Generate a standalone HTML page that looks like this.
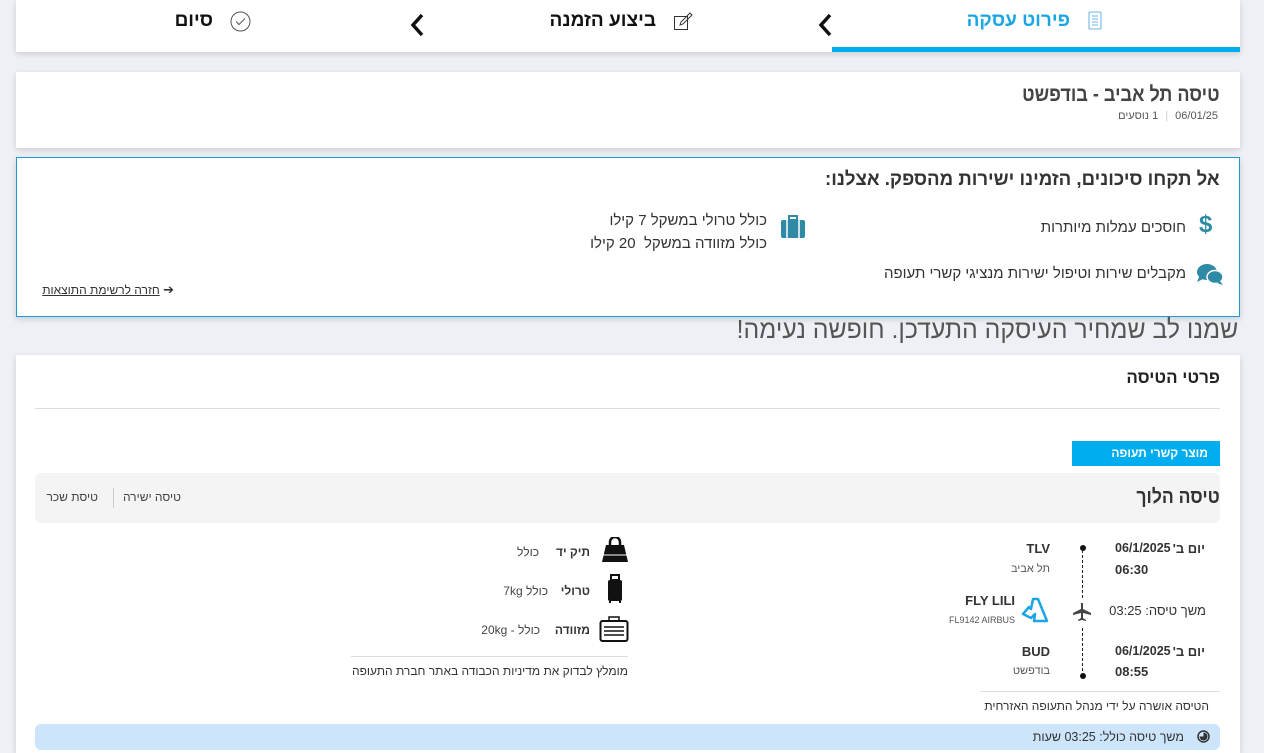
<!DOCTYPE html>
<html lang="he" dir="rtl"><head><meta charset="utf-8">
<style>
*{box-sizing:border-box;margin:0;padding:0}
html{overflow:hidden;width:1264px;height:753px}
body{width:1264px;height:753px;overflow:hidden;background:#eef0f5;font-family:"Liberation Sans","DejaVu Sans",sans-serif;color:#333;position:relative}
.a{position:absolute;white-space:nowrap}
.card{position:absolute;background:#fff;box-shadow:0 2px 6px rgba(0,0,0,.15)}
.r{direction:rtl;text-align:right}
b{font-weight:700}
</style></head><body>

<!-- top nav -->
<div class="card" style="left:16px;top:0;width:1224px;height:52px"></div>
<div class="a" style="left:832px;top:47px;width:408px;height:5px;background:#00aeef"></div>
<div class="a r" style="right:194px;top:10px;font-size:19px;font-weight:700;color:#1aa6e4">פירוט עסקה</div>
<svg class="a" style="left:1087px;top:11px" width="16" height="20" viewBox="0 0 16 20" fill="none" stroke="#6fb6e8" stroke-width="1.1"><rect x="2" y="1" width="12" height="17" rx="1"/><path d="M5 5h6M5 8h6M5 11h6M5 14h6"/></svg>
<svg class="a" style="left:817px;top:13px" width="16" height="24" viewBox="0 0 16 24"><path d="M13 2L4 12l9 10" stroke="#111" stroke-width="3.5" fill="none"/></svg>
<div class="a r" style="right:608px;top:10px;font-size:19px;font-weight:700;color:#111">ביצוע הזמנה</div>
<svg class="a" style="left:673px;top:12px" width="20" height="20" viewBox="0 0 20 20" fill="none" stroke="#333" stroke-width="1"><rect x="1.5" y="4.5" width="13" height="13"/><path d="M7 13l1-3 9-9 2 2-9 9z"/></svg>
<svg class="a" style="left:409px;top:13px" width="16" height="24" viewBox="0 0 16 24"><path d="M13 2L4 12l9 10" stroke="#111" stroke-width="3.5" fill="none"/></svg>
<div class="a r" style="right:1051px;top:10px;font-size:19px;font-weight:700;color:#111">סיום</div>
<svg class="a" style="left:230px;top:11px" width="21" height="21" viewBox="0 0 21 21" fill="none" stroke="#555" stroke-width="1"><circle cx="10.5" cy="10.5" r="9.5"/><path d="M6 10.5l3 3 6-6"/></svg>

<!-- title card -->
<div class="card" style="left:16px;top:72px;width:1224px;height:76px"></div>
<div class="a r" style="right:44px;top:83px;font-size:21px;font-weight:700;color:#444;transform:scaleX(.86);transform-origin:right">טיסה תל אביב - בודפשט</div>
<div class="a r" style="right:46px;top:110px;font-size:11px;color:#555">06/01/25 <span style="color:#ccc;margin:0 4px">|</span> 1 נוסעים</div>

<!-- info box -->
<div class="card" style="left:16px;top:157px;width:1224px;height:160px;border:1px solid #1a9cd8"></div>
<div class="a r" style="right:44px;top:169px;font-size:19px;font-weight:700;color:#333;transform:scaleX(.98);transform-origin:right">אל תקחו סיכונים, הזמינו ישירות מהספק. אצלנו:</div>
<div class="a" style="left:1199px;top:211px;font-size:24px;font-weight:700;color:#2e8aa5">$</div>
<div class="a r" style="right:78px;top:219px;font-size:15px;color:#333">חוסכים עמלות מיותרות</div>
<svg class="a" style="left:1196px;top:263px" width="28" height="24" viewBox="0 0 28 24" fill="#2e8aa5"><ellipse cx="11" cy="9" rx="10" ry="8"/><path d="M3 14l-2 5 6-3z"/><ellipse cx="19" cy="14" rx="8" ry="6.5" stroke="#fff" stroke-width="1.5"/><path d="M24 18l3 4-6-2z"/></svg>
<div class="a r" style="right:78px;top:265px;font-size:15px;color:#333">מקבלים שירות וטיפול ישירות מנציגי קשרי תעופה</div>
<svg class="a" style="left:780px;top:214px" width="26" height="26" viewBox="0 0 26 26" fill="#2e8aa5"><rect x="9" y="2" width="8" height="4" fill="none" stroke="#2e8aa5" stroke-width="2"/><rect x="1" y="6" width="24" height="18" rx="2"/><path d="M7 6v18M19 6v18" stroke="#fff" stroke-width="1.5"/></svg>
<div class="a r" style="right:497px;top:209px;font-size:15px;color:#333;line-height:23px">כולל טרולי במשקל 7 קילו<br>כולל מזוודה במשקל&nbsp; 20 קילו</div>
<div class="a r" style="right:1090px;top:282px;font-size:12px;color:#333"><span style="font-size:13px">➔</span> <u>חזרה לרשימת התוצאות</u></div>

<div class="a r" style="right:26px;top:314px;font-size:26px;color:#555;transform:scaleX(.955);transform-origin:right">שמנו לב שמחיר העיסקה התעדכן. חופשה נעימה!</div>

<!-- details card -->
<div class="card" style="left:16px;top:355px;width:1224px;height:398px"></div>
<div class="a r" style="right:44px;top:368px;font-size:17px;font-weight:700;color:#222">פרטי הטיסה</div>
<div class="a" style="left:35px;top:408px;width:1185px;height:1px;background:#ddd"></div>
<div class="a r" style="left:1072px;top:441px;width:148px;height:25px;background:#00aeef;color:#fff;font-size:12px;font-weight:700;padding:5px 12px 0 0">מוצר קשרי תעופה</div>
<div class="a" style="left:35px;top:473px;width:1185px;height:50px;background:#f4f4f4;border-radius:6px"></div>
<div class="a r" style="right:44px;top:486px;font-size:20px;font-weight:700;color:#333;transform:scaleX(.88);transform-origin:right">טיסה הלוך</div>
<div class="a r" style="right:1083px;top:490px;font-size:12px;color:#444">טיסה ישירה</div>
<div class="a" style="left:113px;top:488px;width:1px;height:20px;background:#ccc"></div>
<div class="a r" style="right:1166px;top:490px;font-size:12px;color:#444">טיסת שכר</div>

<!-- timeline -->
<div class="a" style="left:1115px;top:541px;font-size:12.5px;font-weight:700;color:#333">06/1/2025</div>
<div class="a r" style="right:59px;top:541px;font-size:13px;font-weight:700;color:#333">יום ב'</div>
<div class="a" style="left:1115px;top:562px;font-size:13px;font-weight:700;color:#333">06:30</div>
<div class="a r" style="right:214px;top:541px;font-size:13px;font-weight:700;color:#333">TLV</div>
<div class="a r" style="right:214px;top:563px;font-size:11px;color:#555">תל אביב</div>
<div class="a" style="left:1080px;top:545px;width:6px;height:6px;border-radius:50%;background:#111"></div>
<div class="a" style="left:1082px;top:550px;height:48px;border-left:1.5px dashed #222"></div>
<svg class="a" style="left:1072px;top:602px" width="20" height="20" viewBox="0 0 20 20" fill="#444"><path d="M9 1h2v6l8 4v2l-8-2v5l3 2v1l-4-1-4 1v-1l3-2v-5l-8 2v-2l8-4z"/></svg>
<div class="a" style="left:1082px;top:628px;height:48px;border-left:1.5px dashed #222"></div>
<div class="a" style="left:1080px;top:673px;width:6px;height:6px;border-radius:50%;background:#111"></div>
<div class="a r" style="right:58px;top:603px;font-size:13px;color:#333">משך טיסה: 03:25</div>
<div class="a r" style="right:249px;top:593px;font-size:13px;font-weight:700;color:#333">FLY LILI</div>
<div class="a r" style="right:249px;top:615px;font-size:9px;color:#555">FL9142 AIRBUS</div>
<svg class="a" style="left:1020px;top:596px" width="30" height="30" viewBox="0 0 30 30" fill="none" stroke="#1aa6e4" stroke-width="2.5" stroke-linejoin="round"><path d="M13 3h5l9 22h-13l1-7-4 4-8-4 6-7 2 2z"/></svg>
<div class="a" style="left:1115px;top:644px;font-size:12.5px;font-weight:700;color:#333">06/1/2025</div>
<div class="a r" style="right:59px;top:644px;font-size:13px;font-weight:700;color:#333">יום ב'</div>
<div class="a" style="left:1115px;top:664px;font-size:13px;font-weight:700;color:#333">08:55</div>
<div class="a r" style="right:214px;top:644px;font-size:13px;font-weight:700;color:#333">BUD</div>
<div class="a r" style="right:214px;top:665px;font-size:11px;color:#555">בודפשט</div>
<div class="a" style="left:980px;top:691px;width:240px;height:1px;background:#ddd"></div>
<div class="a r" style="right:55px;top:699px;font-size:12px;color:#333">הטיסה אושרה על ידי מנהל התעופה האזרחית</div>
<div class="a" style="left:35px;top:724px;width:1185px;height:26px;background:#cce5fa;border-radius:6px"></div>
<div class="a r" style="right:80px;top:730px;font-size:12.5px;color:#333">משך טיסה כולל: 03:25 שעות</div>
<svg class="a" style="left:1197px;top:730px" width="13" height="13" viewBox="0 0 13 13"><circle cx="6.5" cy="6.5" r="5.5" fill="none" stroke="#333" stroke-width="1.5"/><path d="M6.5 2.5a4 4 0 1 1-4 4h4z" fill="#333"/></svg>

<!-- baggage -->
<svg class="a" style="left:601px;top:537px" width="28" height="26" viewBox="0 0 28 26"><path d="M9 9V5a5 5 0 0 1 10 0v4" stroke="#111" stroke-width="2.5" fill="none"/><path d="M5 8h18l4 17H1z" fill="#111"/><path d="M2 18h24" stroke="#fff" stroke-width="1"/></svg>
<div class="a r" style="right:674px;top:545px;font-size:12px;font-weight:700;color:#333">תיק יד</div>
<div class="a r" style="right:725px;top:545px;font-size:12px;color:#444">כולל</div>
<svg class="a" style="left:606px;top:574px" width="18" height="30" viewBox="0 0 18 30"><rect x="5" y="1" width="8" height="5" fill="none" stroke="#111" stroke-width="2"/><rect x="2" y="6" width="14" height="21" rx="2" fill="#111"/><path d="M4 27v2M14 27v2" stroke="#111" stroke-width="2"/></svg>
<div class="a r" style="right:674px;top:584px;font-size:12px;font-weight:700;color:#333">טרולי</div>
<div class="a r" style="right:716px;top:584px;font-size:12px;color:#444">כולל 7kg</div>
<svg class="a" style="left:599px;top:615px" width="30" height="28" viewBox="0 0 30 28" fill="none" stroke="#111"><rect x="10" y="2" width="10" height="4" stroke-width="1.5"/><rect x="1.5" y="6" width="27" height="20" rx="2" stroke-width="2"/><path d="M5 12h20M5 16h20M5 20h20" stroke-width="1.5"/></svg>
<div class="a r" style="right:674px;top:623px;font-size:12px;font-weight:700;color:#333">מזוודה</div>
<div class="a r" style="right:724px;top:623px;font-size:12px;color:#444">כולל - 20kg</div>
<div class="a" style="left:351px;top:656px;width:277px;height:1px;background:#ddd"></div>
<div class="a r" style="right:636px;top:664px;font-size:12px;color:#333">מומלץ לבדוק את מדיניות הכבודה באתר חברת התעופה</div>

</body></html>
